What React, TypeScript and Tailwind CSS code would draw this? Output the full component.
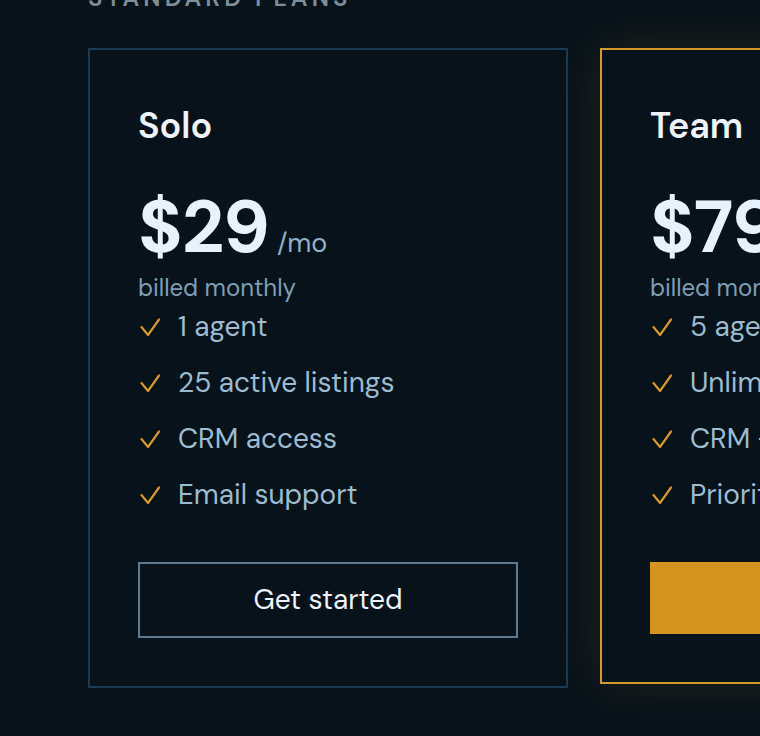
import React from 'react';

type Plan = {
  name: string;
  price: string;
  features: string[];
  cta: string;
  featured?: boolean;
};

const plans: Plan[] = [
  {
    name: 'Solo',
    price: '$29',
    features: ['1 agent', '25 active listings', 'CRM access', 'Email support'],
    cta: 'Get started',
  },
  {
    name: 'Team',
    price: '$79',
    features: ['5 agents', 'Unlimited listings', 'CRM + analytics', 'Priority support'],
    cta: 'Get started',
    featured: true,
  },
];

function CheckMark() {
  return (
    <svg viewBox="0 0 24 24" className="w-[24px] h-[24px] shrink-0" fill="none" stroke="#d89a22" strokeWidth="2.2" strokeLinecap="round" strokeLinejoin="round">
      <path d="M3.5 12 10 20 21 4.5" />
    </svg>
  );
}

function PlanCard({ plan }: { plan: Plan }) {
  return (
    <div
      className={`w-[480px] shrink-0 border-2 bg-[#07121a] p-12 flex flex-col ${
        plan.featured
          ? 'border-[#d49a2c] shadow-[0_0_48px_rgba(212,150,40,0.14)]'
          : 'border-[#1d3a51]'
      }`}
    >
      <h3 className="text-[36px] leading-[44px] font-semibold text-[#eef4f9] mt-[6px]">{plan.name}</h3>

      <div className="flex items-baseline mt-[39px]">
        <span className="text-[74px] leading-[80px] font-bold text-[#e6f2fc] tracking-[-1px]">{plan.price}</span>
        <span className="text-[27px] text-[#8fb0c7] ml-[8px]">/mo</span>
      </div>
      <div className="text-[24px] leading-[28px] text-[#7f9fb5] mt-[7px]">billed monthly</div>

      <ul className="flex flex-col mt-[-3px]">
        {plan.features.map(f => (
          <li key={f} className="flex items-center gap-[16px] h-[56px] text-[28px] text-[#9cbcd2]">
            <CheckMark />
            <span>{f}</span>
          </li>
        ))}
      </ul>

      {plan.featured ? (
        <button className="mt-[39px] h-[72px] w-full bg-[#d4941f] text-[28px] text-[#07121a] font-medium">
          {plan.cta}
        </button>
      ) : (
        <button className="mt-[39px] h-[76px] w-full border-2 border-[#5e7a8e] text-[28px] text-[#eef4f9]">
          {plan.cta}
        </button>
      )}
    </div>
  );
}

export default function App() {
  return (
    <div
      className="w-full min-h-screen bg-[#07121a] overflow-hidden pl-[88px]"
      style={{ fontFamily: '"DM Sans", Inter, "Noto Sans", sans-serif' }}
    >
      <div className="mt-[-14px] text-[24px] leading-[24px] tracking-[0.17em] uppercase text-[#7f8e99] font-semibold">
        Standard plans
      </div>
      <div className="flex items-start gap-8 mt-[38px]">
        {plans.map(p => (
          <PlanCard key={p.name} plan={p} />
        ))}
      </div>
    </div>
  );
}
